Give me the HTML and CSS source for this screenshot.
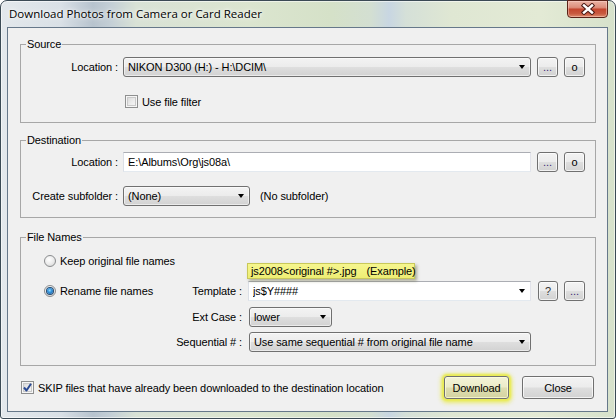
FILE: index.html
```html
<!DOCTYPE html>
<html>
<head>
<meta charset="utf-8">
<title>Download Photos from Camera or Card Reader</title>
<link rel="stylesheet" href="styles.css">
</head>
<body>
<div class="window">
  <div class="titlebar">
    <span class="title">Download Photos from Camera or Card Reader</span>
    <div class="close-btn">
      <svg width="16" height="12" viewBox="0 0 16 12">
        <path d="M4 2.5 L12 9.5 M12 2.5 L4 9.5" stroke="#4a1a14" stroke-width="4.4" stroke-linecap="square" fill="none"/>
        <path d="M4 2.5 L12 9.5 M12 2.5 L4 9.5" stroke="#ffffff" stroke-width="2.4" stroke-linecap="square" fill="none"/>
      </svg>
    </div>
  </div>
  <div class="client">
    <fieldset class="group group-source">
      <legend>Source</legend>
      <div class="row">
        <span class="lbl">Location :</span>
        <div class="combo combo-wide"><span class="combo-text">NIKON D300 (H:) - H:\DCIM\</span><span class="arrow"></span></div>
        <span class="sbtn sbtn-dots">...</span>
        <span class="sbtn">o</span>
      </div>
      <div class="check-row">
        <span class="checkbox"></span><span>Use file filter</span>
      </div>
    </fieldset>

    <fieldset class="group group-dest">
      <legend>Destination</legend>
      <div class="row">
        <span class="lbl">Location :</span>
        <div class="textbox textbox-wide">E:\Albums\Org\js08a\</div>
        <span class="sbtn sbtn-dots">...</span>
        <span class="sbtn">o</span>
      </div>
      <div class="row row-sub">
        <span class="lbl">Create subfolder :</span>
        <div class="combo combo-sub"><span class="combo-text">(None)</span><span class="arrow"></span></div>
        <span class="note">(No subfolder)</span>
      </div>
    </fieldset>

    <fieldset class="group group-names">
      <legend>File Names</legend>
      <div class="fn-row fn-row1">
        <span class="radio"></span><span>Keep original file names</span>
        <div class="tooltip"><span>js2008&lt;original #&gt;.jpg</span><span class="tip-ex">(Example)</span></div>
      </div>
      <div class="fn-row fn-row2">
        <div class="fn-left"><span class="radio radio-on"><span class="dot"></span></span><span>Rename file names</span></div>
        <span class="fn-lbl">Template :</span>
        <div class="textbox editcombo"><span class="combo-text">js$Y####</span><span class="arrow"></span></div>
        <span class="sbtn sbtn-q">?</span>
        <span class="sbtn sbtn-dots">...</span>
      </div>
      <div class="fn-row fn-row3">
        <div class="fn-left"></div>
        <span class="fn-lbl">Ext Case :</span>
        <div class="combo combo-ext"><span class="combo-text">lower</span><span class="arrow"></span></div>
      </div>
      <div class="fn-row fn-row4">
        <div class="fn-left"></div>
        <span class="fn-lbl">Sequential # :</span>
        <div class="combo combo-seq"><span class="combo-text">Use same sequential # from original file name</span><span class="arrow"></span></div>
      </div>
    </fieldset>

    <div class="bottom-row">
      <span class="checkbox checked">
        <svg width="11" height="11" viewBox="0 0 11 11"><path d="M2 5.5 L4.5 8.5 L9 1.8" stroke="#2b4a93" stroke-width="2" fill="none" stroke-linejoin="round"/></svg>
      </span>
      <span class="skip-text">SKIP files that have already been downloaded to the destination location</span>
      <span class="btn btn-download">Download</span>
      <span class="btn btn-close">Close</span>
    </div>
  </div>
</div>
</body>
</html>
```

FILE: styles.css
```css
* { box-sizing: border-box; }
html, body { margin: 0; padding: 0; }
body {
  width: 616px;
  height: 419px;
  overflow: hidden;
  background: #ffffff;
  font-family: "Liberation Sans", Arial, sans-serif;
  font-size: 11px;
  letter-spacing: -0.1px;
  color: #000;
}

.window {
  width: 616px;
  height: 419px;
  border: 1px solid #3b4a55;
  border-radius: 7px 7px 3px 3px;
  padding: 0 7px 6px 6px;
  display: flex;
  flex-direction: column;
  background:
    linear-gradient(90deg,
      #e3e8ec 0px, #d9e0e6 60px, #b7c3ce 92px, #c4cfd6 110px, #d9e2d6 135px,
      #dbe5cf 250px, #d5e1c8 330px, #d3dfd2 370px, #c8d6e2 388px, #d5e0d8 405px,
      #dfe7d3 450px, #e3ead5 540px, #d6e1cb 616px);
  box-shadow: inset 0 0 0 1px rgba(255,255,255,0.55);
}

.titlebar {
  height: 26px;
  display: flex;
  align-items: flex-start;
  justify-content: space-between;
  padding-left: 2px;
}
.title {
  font-family: "Open Sans", "Noto Sans", sans-serif;
  font-size: 11.5px;
  letter-spacing: 0;
  line-height: 26px;
  color: #000;
  text-shadow: 0 0 6px #fff, 0 0 3px #fff;
}
.close-btn {
  width: 41px;
  height: 18px;
  margin-top: -1px;
  border: 1px solid #5a2318;
  border-radius: 0 0 4px 4px;
  background: linear-gradient(#eab3a4 0%, #dd8f7c 40%, #c4472f 52%, #c85a40 78%, #dd8a6b 100%);
  box-shadow: inset 0 0 0 1px rgba(255,220,210,0.45);
  display: flex;
  align-items: center;
  justify-content: center;
}

.client {
  flex: 1;
  border: 1px solid #66788a;
  background: #f0f0f0;
  padding: 0 11px 0 12px;
  display: flex;
  flex-direction: column;
}

.group {
  margin: 0;
  border: 1px solid #a7a7a7;
  min-width: 0;
}
.group legend {
  margin-left: 5px;
  padding: 0 1px;
  line-height: 13px;
  font-size: 11px;
}
.group-source { margin-top: 10px; padding: 6px 10px 14px 0; }
.group-dest { margin-top: 11px; padding: 5px 10px 11px 0; }
.group-names { margin-top: 13px; padding: 7px 10px 13px 0; }

.row {
  display: flex;
  align-items: center;
  height: 20px;
}
.row-sub { margin-top: 14px; }
.lbl {
  width: 97px;
  margin-right: 5px;
  text-align: right;
  white-space: nowrap;
}

.combo {
  height: 20px;
  border: 1px solid #707070;
  border-radius: 3px;
  background: linear-gradient(#f3f3f3 0%, #ececec 48%, #dedede 52%, #d2d2d2 100%);
  box-shadow: inset 0 0 0 1px rgba(255,255,255,0.55);
  display: flex;
  align-items: center;
  padding: 0 4px 0 4px;
}
.combo-text {
  flex: 1;
  white-space: nowrap;
  overflow: hidden;
}
.arrow {
  width: 0;
  height: 0;
  border-left: 3.5px solid transparent;
  border-right: 3.5px solid transparent;
  border-top: 4px solid #000;
  margin-right: 1px;
}
.combo-wide { width: 408px; }
.combo-sub { width: 127px; }
.combo-ext { width: 83px; margin-left: 1px; }
.combo-seq { width: 282px; margin-left: 1px; }

.textbox {
  height: 20px;
  background: #fff;
  border: 1px solid;
  border-color: #abadb3 #e2e3ea #e3e9ef #dbdfe6;
  display: flex;
  align-items: center;
  padding-left: 4px;
  white-space: nowrap;
}
.textbox-wide { width: 408px; }
.editcombo { width: 283px; padding-right: 4px; }

.sbtn {
  width: 21px;
  height: 20px;
  margin-left: 6px;
  border: 1px solid #707070;
  border-radius: 3px;
  background: linear-gradient(#f3f3f3 0%, #ececec 48%, #dedede 52%, #d2d2d2 100%);
  box-shadow: inset 0 0 0 1px rgba(255,255,255,0.7);
  display: flex;
  align-items: center;
  justify-content: center;
  font-size: 11px;
}
.sbtn-dots { color: #3a2a78; align-items: flex-end; padding-bottom: 3px; }
.sbtn-q { margin-left: 7px; width: 20px; color: #333; }

.note { margin-left: 10px; }

.check-row {
  display: flex;
  align-items: center;
  height: 13px;
  margin-top: 18px;
  padding-left: 104px;
}
.checkbox {
  width: 13px;
  height: 13px;
  border: 1px solid #8e8f8f;
  background: linear-gradient(135deg, #d4d4d4 0%, #eeeeee 60%, #f7f7f7 100%);
  box-shadow: inset 0 0 0 1px #f6f6f6, inset 0 0 0 2px #c9c9c9;
  margin-right: 4px;
  display: flex;
  align-items: center;
  justify-content: center;
  flex: none;
}

.fn-row {
  display: flex;
  align-items: center;
  height: 20px;
}
.fn-row1 { padding-left: 23px; position: relative; }
.fn-row2 { margin-top: 10px; }
.fn-row3 { margin-top: 6px; }
.fn-row4 { margin-top: 5px; }
.fn-left {
  width: 140px;
  padding-left: 23px;
  display: flex;
  align-items: center;
  white-space: nowrap;
}
.fn-lbl {
  width: 81px;
  margin-right: 6px;
  text-align: right;
  white-space: nowrap;
}

.radio {
  width: 12px;
  height: 12px;
  border-radius: 50%;
  border: 1px solid #8a8c8e;
  background: radial-gradient(circle at 40% 35%, #ffffff 0%, #ececec 50%, #cfcfcf 100%);
  margin-right: 4px;
  display: flex;
  align-items: center;
  justify-content: center;
  flex: none;
}
.dot {
  width: 6px;
  height: 6px;
  border-radius: 50%;
  background: radial-gradient(circle at 45% 40%, #9fe0ff 0%, #3a9ae0 35%, #0d4f96 100%);
  box-shadow: 0 0 0 1px #244a70;
}

.tooltip {
  position: absolute;
  left: 226px;
  top: 12px;
  width: 168px;
  height: 16px;
  padding-left: 3px;
  display: flex;
  align-items: center;
  background: linear-gradient(#f6f68e, #eeee74);
  border: 1px solid #c8c85a;
  box-shadow: 2px 2px 3px rgba(90,90,40,0.45);
  white-space: nowrap;
  color: #000;
}
.tip-ex { margin-left: 10px; }

.bottom-row {
  display: flex;
  align-items: center;
  height: 23px;
  margin-top: 10px;
  padding-left: 1px;
  padding-right: 2px;
}
.skip-text { flex: 1; white-space: nowrap; }
.btn {
  height: 23px;
  border: 1px solid #707070;
  border-radius: 3px;
  background: linear-gradient(#f3f3f3 0%, #ececec 48%, #dedede 52%, #d2d2d2 100%);
  box-shadow: inset 0 0 0 1px rgba(255,255,255,0.7);
  display: flex;
  align-items: center;
  justify-content: center;
}
.btn-download {
  width: 65px;
  background: linear-gradient(#f3f3d8 0%, #ececc8 48%, #deddb0 52%, #d4d3a2 100%);
  box-shadow: inset 0 0 0 1px rgba(255,255,220,0.7), 0 0 2px 2px #e9eb55, 0 1px 4px 3px rgba(232,234,70,0.75);
}
.btn-close { width: 72px; margin-left: 13px; }
```
